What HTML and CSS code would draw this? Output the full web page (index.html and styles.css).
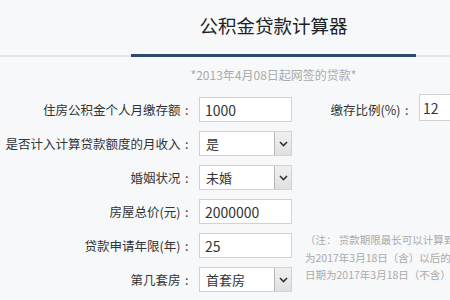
FILE: index.html
```html
<!DOCTYPE html>
<html lang="zh-CN">
<head>
  <meta charset="UTF-8">
  <meta name="viewport" content="width=device-width, initial-scale=1.0">
  <title>公积金贷款计算器</title>
  <link rel="stylesheet" href="styles.css">
</head>
<body>
  <div class="page">
    <div class="header">
      <h1 class="title">公积金贷款计算器</h1>
    </div>
    <div class="subtitle">*2013年4月08日起网签的贷款*</div>

    <form class="calc-form">
      <label class="label">住房公积金个人月缴存额<span class="colon">:</span></label>
      <input class="field" type="text" value="1000">
      <label class="label side-label">缴存比例(%)<span class="colon">:</span></label>
      <input class="field side-field" type="text" value="12">

      <label class="label">是否计入计算贷款额度的月收入<span class="colon">:</span></label>
      <div class="select">
        <span>是</span>
        <span class="select-btn">
          <svg width="9" height="6" viewBox="0 0 9 6"><path d="M1 1l3.5 3.5L8 1" fill="none" stroke="#333" stroke-width="1.6"/></svg>
        </span>
      </div>

      <label class="label">婚姻状况<span class="colon">:</span></label>
      <div class="select">
        <span>未婚</span>
        <span class="select-btn">
          <svg width="9" height="6" viewBox="0 0 9 6"><path d="M1 1l3.5 3.5L8 1" fill="none" stroke="#333" stroke-width="1.6"/></svg>
        </span>
      </div>

      <label class="label">房屋总价(元)<span class="colon">:</span></label>
      <input class="field" type="text" value="2000000">

      <label class="label">贷款申请年限(年)<span class="colon">:</span></label>
      <input class="field" type="text" value="25">
      <p class="note">（注： 贷款期限最长可以计算到借款人法定退休年龄后5年，网签日期<br>为2017年3月18日（含）以后的，贷款期限不超过25年；网签<br>日期为2017年3月18日（不含）以前的，贷款期限不超过30年）</p>

      <label class="label">第几套房<span class="colon">:</span></label>
      <div class="select">
        <span>首套房</span>
        <span class="select-btn">
          <svg width="9" height="6" viewBox="0 0 9 6"><path d="M1 1l3.5 3.5L8 1" fill="none" stroke="#333" stroke-width="1.6"/></svg>
        </span>
      </div>

      <label class="label">贷款利率(%)<span class="colon">:</span></label>
      <input class="field" type="text" value="3.25">
    </form>
  </div>
</body>
</html>
```

FILE: styles.css
```css
html, body {
  margin: 0;
  padding: 0;
  background-color: #f7f8fa;
  overflow: hidden;
}

.page {
  width: 450px;
  height: 300px;
  overflow: hidden;
  font-family: "Noto Sans CJK SC", "Noto Sans", sans-serif;
  color: #333;
}

.header {
  border-bottom: 2px solid #e4e6ea;
}

.title {
  width: 285px;
  margin: 0 0 -2px 131px;
  padding: 16px 0 19px;
  font-size: 18.5px;
  line-height: 19px;
  font-weight: normal;
  color: #222;
  text-align: center;
  border-bottom: 3px solid #2d4a6c;
}

.subtitle {
  width: 285px;
  margin: 10px 0 0 131px;
  font-size: 12px;
  line-height: 16px;
  color: #aaa;
  text-align: center;
}

.calc-form {
  display: grid;
  grid-template-columns: 193px 93px 115px 200px;
  grid-auto-rows: 25px;
  column-gap: 6px;
  row-gap: 9px;
  align-items: center;
  margin-top: 14px;
}

.label {
  grid-column: 1;
  font-size: 12.5px;
  text-align: right;
  white-space: nowrap;
}

/* colon sits in the middle of a full-width cell */
.colon {
  display: inline-block;
  width: 1em;
  text-align: center;
}

.field {
  box-sizing: border-box;
  width: 93px;
  height: 25px;
  margin: 0;
  padding: 0 5px;
  border: 1px solid #d2d2d2;
  background: #fff;
  font-family: inherit;
  font-size: 14px;
  color: #333;
  outline: none;
}

.side-label {
  grid-column: 3;
  grid-row: 1;
}

.side-field {
  grid-column: 4;
  grid-row: 1;
  width: 60px;
  height: 27px;
  padding: 0 3px;
  margin-top: -4px;
}

.select {
  box-sizing: border-box;
  width: 93px;
  height: 25px;
  display: flex;
  align-items: center;
  justify-content: space-between;
  border: 1px solid #d2d2d2;
  background: #fff;
  font-size: 13px;
  padding-left: 6px;
}

.select-btn {
  box-sizing: border-box;
  width: 17px;
  height: 23px;
  display: flex;
  align-items: center;
  justify-content: center;
  background: linear-gradient(#f0f0f0, #e0e0e0);
  border-left: 1px solid #b5b5b5;
}

.note {
  grid-column: 3 / span 2;
  grid-row: 5 / span 3;
  align-self: start;
  margin: -2px 0 0 7px;
  font-size: 10.5px;
  line-height: 17.5px;
  color: #aaa;
  white-space: nowrap;
}
```
